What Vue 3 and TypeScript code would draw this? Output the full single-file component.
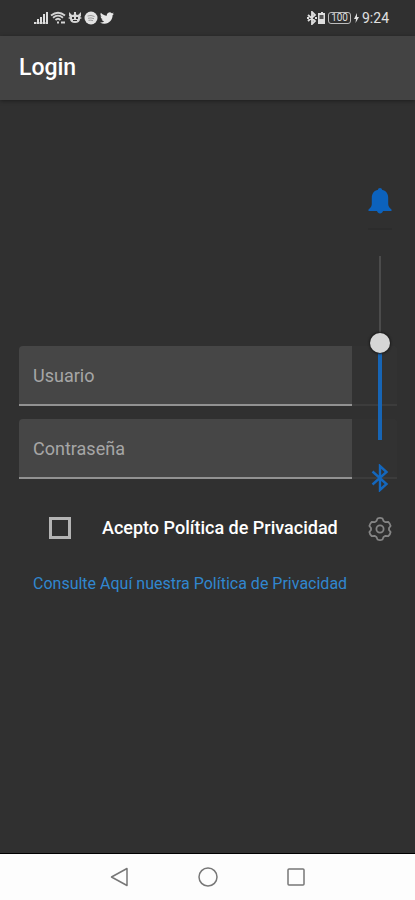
<script setup lang="ts">
import { ref, computed } from 'vue'

const user = ref('')
const password = ref('')
const accepted = ref(false)
const volume = ref(53)

const trackFill = computed(() => ({ '--level': `${volume.value}%` }))
</script>

<template>
  <div class="screen">
    <div class="status">
      <div class="status-group">
        <svg width="14" height="14" viewBox="0 0 14 14" fill="#dcdcdc">
          <path d="M0 11h2v2H0zM3 8h2v5H3zM6 6h2v7H6zM9 3h2v10H9zM12 1h2v12h-2z" />
          <path d="M0 11h14v2H0z" opacity="0.5" />
        </svg>
        <svg width="16" height="14" viewBox="0 0 16 14" fill="none" stroke="#d4d4d4" stroke-width="1.800">
          <path d="M1 4.500Q8-1 15 4.500M3 6.800Q8 2.500 13 6.800M5.500 9Q8 6.500 10.500 9" />
          <path d="M7 11.500h2M11 11.500h4" stroke-width="2" />
        </svg>
        <svg width="14" height="14" viewBox="0 0 14 14" fill="#d4d4d4">
          <path fill-rule="evenodd" d="M1 1l3 3 2-.5V1h2v2.500l2 .5 3-3v4l-1 1 2 1-2 1c0 2.500-2 4-5 4s-5-1.500-5-4L0 7l2-1-1-1zM4 6v2h2V6zM8 6v2h2V6zM5 10h4V9H5z" />
        </svg>
        <svg width="14" height="14" viewBox="0 0 14 14">
          <circle cx="7" cy="7" r="6.500" fill="#e2e2e2" />
          <path d="M3.500 5q3.500-1.300 7 .5M4 7.300q3-1 6 .4M4.500 9.400q2.500-.7 4.500.3" fill="none" stroke="#999" stroke-width="1" />
        </svg>
        <svg width="14" height="14" viewBox="0 0 24 24" fill="#e8e8e8">
          <path d="M23.950 4.570a10 10 0 01-2.820.78 4.960 4.960 0 002.160-2.720c-.95.55-2 .95-3.130 1.180a4.920 4.920 0 00-8.380 4.480C7.690 8.090 4.070 6.130 1.640 3.160a4.920 4.920 0 001.520 6.570 4.900 4.900 0 01-2.230-.61v.06a4.920 4.920 0 003.950 4.830 5 5 0 01-2.210.08 4.940 4.940 0 004.600 3.420A9.870 9.870 0 010 19.540a14 14 0 007.550 2.210c9.050 0 14-7.500 14-13.980 0-.21 0-.42-.02-.63a9.940 9.940 0 002.420-2.570z" />
        </svg>
      </div>
      <div class="status-group status-right">
        <svg width="18" height="14" viewBox="0 0 18 14">
          <path d="M1 4l7 6-3 3V1l3 3-7 6M0 7h2M8 7h2" fill="none" stroke="#dedede" stroke-width="1.800" />
          <path d="M12 2h2V1h2v1h2v11h-7V2z" fill="#dedede" />
          <path d="M12.500 4h4v4h-4z" fill="#555" />
        </svg>
        <span class="battery">100</span>
        <svg width="5" height="10" viewBox="0 0 5 10" fill="#e0e0e0"><path d="M3 0L0 6h2l-.5 4L5 4H3z" /></svg>
        <time>9:24</time>
      </div>
    </div>

    <header class="appbar"><h1>Login</h1></header>

    <main class="content">
      <form class="form" @submit.prevent>
        <input v-model="user" class="field" type="text" placeholder="Usuario" aria-label="Usuario" />
        <input v-model="password" class="field" type="password" placeholder="Contraseña" aria-label="Contraseña" />
        <label class="consent">
          <input v-model="accepted" type="checkbox" />
          <span>Acepto Política de Privacidad</span>
        </label>
        <a class="policy" href="#privacidad">Consulte Aquí nuestra Política de Privacidad</a>
      </form>

      <aside class="volume">
        <button type="button" class="icon-button bell" aria-label="Sonido">
          <svg width="24" height="26" viewBox="0 0 24 26" fill="#0c62bd">
            <path d="M12 0c1.200 0 2 .8 2 1.800 4 .9 6.200 3.900 6.200 8V16c0 2.300 1.200 4 3.300 5.500v1.500H.5v-1.500C2.600 20 3.800 18.300 3.800 16V9.800c0-4.100 2.200-7.100 6.200-8C10 .8 10.800 0 12 0zM9 23h6c-.5 1.600-1.500 2.500-3 2.500s-2.500-.9-3-2.500z" />
          </svg>
        </button>
        <input v-model.number="volume" class="slider" :style="trackFill" type="range" min="0" max="100" aria-label="Volumen" />
        <svg class="bluetooth" width="18" height="28" viewBox="0 0 18 28" fill="none" stroke="#1467bd" stroke-width="2.400">
          <path d="M1.500 7.500l14 12.500-6.500 6V2l6.500 6L1.500 20.500" />
        </svg>
        <button type="button" class="icon-button" aria-label="Ajustes">
          <svg width="24" height="26" viewBox="0 0 24 26" fill="none" stroke="#858585" stroke-width="1.800" stroke-linejoin="round">
            <path d="M9.500 2.500Q12 1.200 14.500 2.500L15.500 5 17.500 6.200 20.300 5.800Q22.200 7.600 22.600 10L21 12V14L22.600 16Q22.200 18.400 20.300 20.200L17.500 19.800 15.500 21 14.500 23.500Q12 24.800 9.500 23.500L8.500 21 6.500 19.800 3.700 20.200Q1.800 18.400 1.400 16L3 14V12L1.400 10Q1.800 7.600 3.700 5.800L6.500 6.200 8.500 5Z" />
            <circle cx="12" cy="13" r="3.600" />
          </svg>
        </button>
      </aside>
    </main>

    <nav class="navbar">
      <button type="button" aria-label="Atrás">
        <svg width="20" height="20" viewBox="0 0 20 20"><path d="M1.500 10L17 1.500v17z" /></svg>
      </button>
      <button type="button" aria-label="Inicio">
        <svg width="20" height="20" viewBox="0 0 20 20"><circle cx="10" cy="10" r="9" /></svg>
      </button>
      <button type="button" aria-label="Recientes">
        <svg width="20" height="20" viewBox="0 0 20 20"><rect x="2" y="2" width="16" height="16" rx="1" /></svg>
      </button>
    </nav>
  </div>
</template>

<style>
body {
  margin: 0;
  background: #303030;
}
</style>

<style scoped>
.screen {
  display: flex;
  flex-direction: column;
  min-height: 100vh;
  background: #303030;
  color: #fff;
  font-family: Roboto, "Liberation Sans", sans-serif;
}
.status {
  display: flex;
  justify-content: space-between;
  align-items: center;
  height: 36px;
  padding: 0 26px 0 34px;
  background: #303030;
}
.status-group {
  display: flex;
  align-items: center;
  gap: 2px;
}
.status-right {
  gap: 3px;
}
.status time {
  font-size: 14px;
  line-height: 16px;
  color: #e0e0e0;
}
.battery {
  padding: 0 2px;
  border: 1px solid #bdbdbd;
  border-radius: 3px;
  font-size: 10px;
  line-height: 10px;
  color: #dedede;
}
.appbar {
  display: flex;
  align-items: center;
  height: 64px;
  padding: 0 19px;
  background: #434343;
  box-shadow: 0 1px 4px rgba(0, 0, 0, 0.4);
}
h1 {
  margin: 0;
  font-size: 23px;
  font-weight: 500;
  line-height: 28px;
}
.content {
  position: relative;
  flex: 1;
  display: flex;
  flex-direction: column;
  justify-content: center;
}
.form {
  display: flex;
  flex-direction: column;
  padding: 0 18px 0 19px;
}
.field {
  box-sizing: border-box;
  width: 100%;
  height: 60px;
  margin: 0 0 13px;
  padding: 0 14px;
  border: 0;
  border-bottom: 2px solid #929292;
  border-radius: 4px 4px 0 0;
  outline: 0;
  background: #464646;
  color: #fff;
  font-family: inherit;
  font-size: 18px;
}
.field::placeholder {
  color: #a6a6a6;
  opacity: 1;
}
.consent {
  display: flex;
  align-items: center;
  gap: 31px;
  height: 48px;
  margin: 12px 0;
  padding-left: 30px;
  font-size: 18px;
  font-weight: 500;
  line-height: 24px;
  white-space: nowrap;
}
.consent input {
  appearance: none;
  box-sizing: border-box;
  width: 22px;
  height: 22px;
  margin: 0;
  border: 3px solid #b4b4b4;
}
.consent input:checked {
  background: #0c62bd;
}
.policy {
  align-self: flex-start;
  padding: 8px 14px 11px;
  color: #3187cf;
  font-size: 16px;
  line-height: 24px;
  text-decoration: none;
  white-space: nowrap;
}
.volume {
  position: absolute;
  top: 76px;
  right: 7px;
  display: flex;
  flex-direction: column;
  align-items: center;
  width: 56px;
  padding: 12px 0 18px;
  box-sizing: border-box;
  background: rgba(48, 48, 48, 0.88);
}
.icon-button {
  display: flex;
  padding: 0;
  border: 0;
  background: none;
}
.bell {
  padding-bottom: 14px;
  border-bottom: 2px solid #2c2c2c;
}
.slider {
  appearance: none;
  writing-mode: vertical-lr;
  direction: rtl;
  width: 20px;
  height: 184px;
  margin: 26px 0 24px;
  background:
    linear-gradient(to top, #1765b5 var(--level), transparent var(--level)) center / 4px 100% no-repeat,
    linear-gradient(#4b4b4b, #4b4b4b) center / 2px 100% no-repeat;
}
.slider::-webkit-slider-thumb {
  appearance: none;
  width: 20px;
  height: 20px;
  border-radius: 50%;
  background: #d6d6d6;
  box-shadow: 0 0 2px 1px #1c1c1c;
}
.bluetooth {
  margin-bottom: 24px;
}
.navbar {
  display: flex;
  justify-content: center;
  align-items: center;
  gap: 68px;
  height: 47px;
  border-top: 1px solid #000;
  box-sizing: border-box;
  background: #fdfdfd;
}
.navbar button {
  display: flex;
  padding: 0;
  border: 0;
  background: none;
}
.navbar svg {
  fill: none;
  stroke: #777;
  stroke-width: 1.5;
  stroke-linejoin: round;
}
</style>
